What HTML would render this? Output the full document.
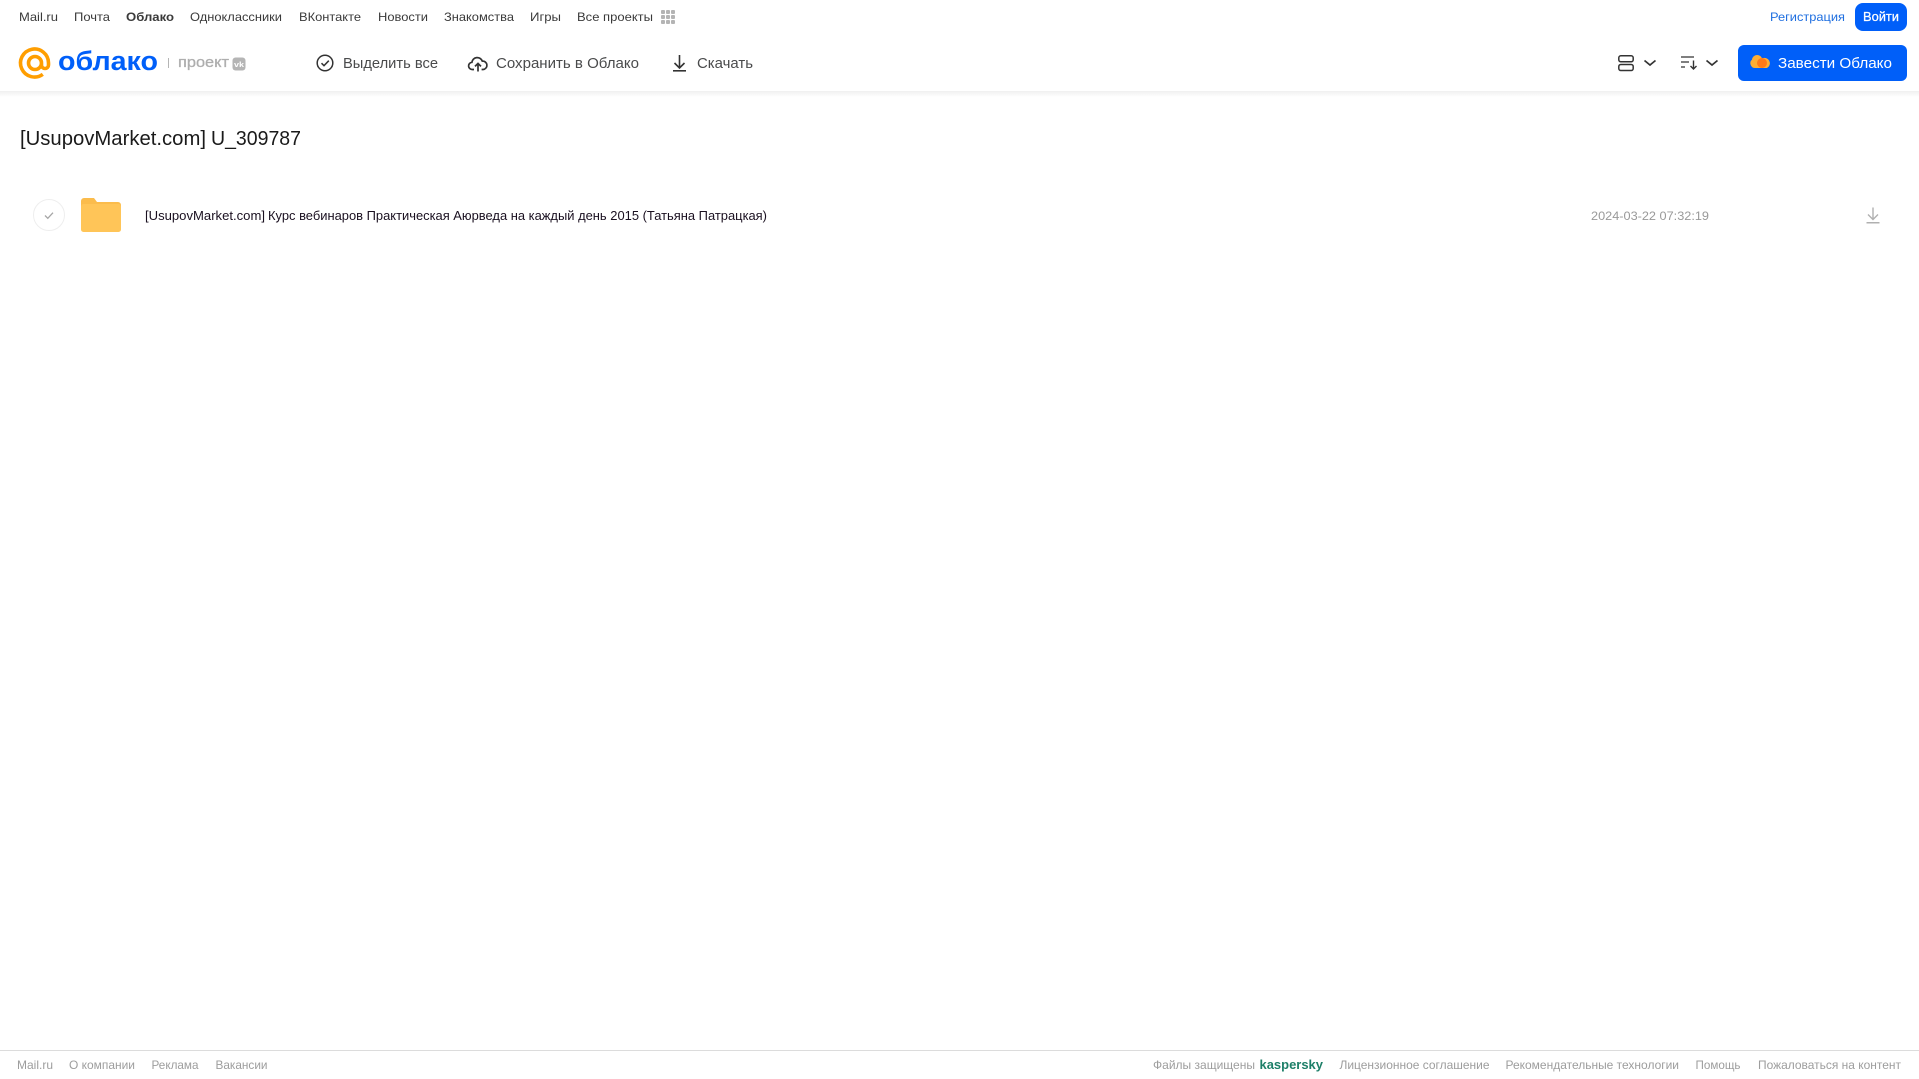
<!DOCTYPE html>
<html lang="ru">
<head>
<meta charset="utf-8">
<title>Облако</title>
<style>
html,body{margin:0;padding:0;background:#fff;width:1919px;height:1079px;overflow:hidden}
svg{display:block;position:absolute;left:0;top:0}
text{font-family:"Liberation Sans",sans-serif;white-space:pre}
.n{font-size:12px;fill:#3a3a3a}
.t{font-size:15px;fill:#4a4b4c}
.f{font-size:12px;fill:#9d9d9d}
</style>
</head>
<body>
<svg width="1919" height="1079" viewBox="0 0 1919 1079" xmlns="http://www.w3.org/2000/svg">
<defs>
<linearGradient id="sh" x1="0" y1="0" x2="0" y2="1"><stop offset="0" stop-color="#f0f0f0"/><stop offset="1" stop-color="#fff"/></linearGradient>
</defs>
<rect x="0" y="91" width="1919" height="6" fill="url(#sh)"/>

<!-- top nav -->
<text class="n" x="19" y="21" textLength="39" lengthAdjust="spacingAndGlyphs">Mail.ru</text>
<text class="n" x="74" y="21" textLength="36" lengthAdjust="spacingAndGlyphs">Почта</text>
<text class="n" x="126" y="21" textLength="48" lengthAdjust="spacingAndGlyphs" font-weight="700">Облако</text>
<text class="n" x="190" y="21" textLength="92" lengthAdjust="spacingAndGlyphs">Одноклассники</text>
<text class="n" x="299" y="21" textLength="62" lengthAdjust="spacingAndGlyphs">ВКонтакте</text>
<text class="n" x="378" y="21" textLength="50" lengthAdjust="spacingAndGlyphs">Новости</text>
<text class="n" x="444" y="21" textLength="70" lengthAdjust="spacingAndGlyphs">Знакомства</text>
<text class="n" x="530" y="21" textLength="31" lengthAdjust="spacingAndGlyphs">Игры</text>
<text class="n" x="577" y="21" textLength="76" lengthAdjust="spacingAndGlyphs">Все проекты</text>
<g fill="#b4b4b4">
<rect x="661" y="10" width="4" height="4" rx="1"/><rect x="666" y="10" width="4" height="4" rx="1"/><rect x="671" y="10" width="4" height="4" rx="1"/>
<rect x="661" y="15" width="4" height="4" rx="1"/><rect x="666" y="15" width="4" height="4" rx="1"/><rect x="671" y="15" width="4" height="4" rx="1"/>
<rect x="661" y="20" width="4" height="4" rx="1"/><rect x="666" y="20" width="4" height="4" rx="1"/><rect x="671" y="20" width="4" height="4" rx="1"/>
</g>

<text x="1770" y="21" font-size="12" fill="#1f6fe0" textLength="75" lengthAdjust="spacingAndGlyphs">Регистрация</text>
<rect x="1855" y="3" width="52" height="28" rx="8" fill="#005ff9"/>
<text x="1863" y="21" font-size="12.500" fill="#fff" stroke="#fff" stroke-width="0.250" textLength="36" lengthAdjust="spacingAndGlyphs">Войти</text>

<!-- logo -->
<path d="M41.500 63a6.500 6.500 0 1 1-6.500-6.500a6.500 6.500 0 0 1 6.500 6.500v2a3.500 3.500 0 0 0 7 0v-2a14 14 0 1 0-5.700 11.300" fill="none" stroke="#ff9e00" stroke-width="3.600"/>
<text x="58" y="70" font-size="27" font-weight="700" fill="#005ff9" textLength="100" lengthAdjust="spacingAndGlyphs">облако</text>
<rect x="168" y="58" width="1" height="10" fill="#b5b5b5"/>
<text x="178" y="67" font-size="15" fill="#aeaeae" stroke="#aeaeae" stroke-width="0.300" textLength="51" lengthAdjust="spacingAndGlyphs">проект</text>
<rect x="232.500" y="57.500" width="13" height="13" rx="3" fill="#b5b5b5"/>
<text x="234" y="67" font-size="7.500" font-weight="700" fill="#fff" textLength="10" lengthAdjust="spacingAndGlyphs">vk</text>

<!-- toolbar -->
<circle cx="325" cy="63" r="7.800" fill="none" stroke="#333" stroke-width="1.500"/>
<path d="M321.500 63.200l2.500 2.500l4.800-5" fill="none" stroke="#333" stroke-width="1.500"/>
<text class="t" x="343" y="68" textLength="95" lengthAdjust="spacingAndGlyphs">Выделить все</text>

<path d="M474 69.500h-1.500a3.600 3.600 0 0 1-.6-7.200a5.400 5.400 0 0 1 10.400-1.200a4.200 4.200 0 0 1 .8 8.400h-1.500" fill="none" stroke="#333" stroke-width="1.700"/>
<path d="M478 71.500v-8M475 66.400l3-3l3 3" fill="none" stroke="#333" stroke-width="1.700"/>
<text class="t" x="496" y="68" textLength="143" lengthAdjust="spacingAndGlyphs">Сохранить в Облако</text>

<path d="M679.500 55v13M674.500 63l5 5l5-5" fill="none" stroke="#333" stroke-width="1.600"/>
<rect x="673" y="70" width="13" height="1.600" fill="#333"/>
<text class="t" x="697" y="68" textLength="56" lengthAdjust="spacingAndGlyphs">Скачать</text>

<!-- view controls -->
<rect x="1618.800" y="55.800" width="14.400" height="6" rx="2" fill="none" stroke="#333" stroke-width="1.500"/>
<rect x="1618.800" y="64.500" width="14.400" height="6" rx="2" fill="none" stroke="#333" stroke-width="1.500"/>
<path d="M1644.500 60.500l5.500 4.500l5.500-4.500" fill="none" stroke="#333" stroke-width="1.700"/>
<path d="M1681 57h13M1681 62h8M1681 67h4" fill="none" stroke="#333" stroke-width="1.300"/>
<path d="M1693.500 60.500v8.500M1690.500 66l3 3l3-3" fill="none" stroke="#333" stroke-width="1.400"/>
<path d="M1706.500 60.500l5.500 4.500l5.500-4.500" fill="none" stroke="#333" stroke-width="1.700"/>

<rect x="1738" y="45" width="169" height="36" rx="6" fill="#005ff9"/>
<path d="M1757 55a5 5 0 0 1 5 3.500a5.200 5.200 0 0 1 5 9.500h-12a4.800 4.800 0 0 1-3-8.400a5 5 0 0 1 5-4.600z" fill="#ffae33"/>
<circle cx="1762" cy="63" r="5" fill="#ff7a1a"/>
<text x="1778" y="68" font-size="15" fill="#fff" textLength="114" lengthAdjust="spacingAndGlyphs">Завести Облако</text>

<!-- title -->
<text x="20" y="145" font-size="20" fill="#1a1a1a" textLength="186" lengthAdjust="spacingAndGlyphs">[UsupovMarket.com]</text>
<text x="211" y="145" font-size="20" fill="#1a1a1a" textLength="90" lengthAdjust="spacingAndGlyphs">U_309787</text>

<!-- row -->
<circle cx="49" cy="215" r="15.500" fill="#fff" stroke="#eeeeee" stroke-width="1"/>
<path d="M45 215.500l2.800 2.800l5.200-5.600" fill="none" stroke="#a6a6a6" stroke-width="1.300"/>
<path d="M81 201a3 3 0 0 1 3-3h10l3 4h21a3 3 0 0 1 3 3v5h-40z" fill="#fbbc4c"/>
<rect x="81" y="204" width="40" height="28" rx="2.500" fill="#ffc558"/>
<text x="145" y="220" font-size="13" fill="#1a1020" textLength="120" lengthAdjust="spacingAndGlyphs">[UsupovMarket.com]</text>
<text x="268" y="220" font-size="13" fill="#1a1020" textLength="499" lengthAdjust="spacingAndGlyphs">Курс вебинаров Практическая Аюрведа на каждый день 2015 (Татьяна Патрацкая)</text>
<text x="1591" y="220" font-size="12" fill="#999" textLength="118" lengthAdjust="spacingAndGlyphs">2024-03-22 07:32:19</text>
<path d="M1873 207.500v12M1868 214.500l5 5l5-5" fill="none" stroke="#b0b0b0" stroke-width="1.400"/>
<rect x="1866.500" y="222" width="13" height="1.500" fill="#b0b0b0"/>

<!-- footer -->
<rect x="0" y="1050" width="1919" height="1" fill="#dcdcdc"/>
<text class="f" x="17" y="1069" textLength="36" lengthAdjust="spacingAndGlyphs">Mail.ru</text>
<text class="f" x="69" y="1069" textLength="66" lengthAdjust="spacingAndGlyphs">О компании</text>
<text class="f" x="151.500" y="1069" textLength="47" lengthAdjust="spacingAndGlyphs">Реклама</text>
<text class="f" x="215.500" y="1069" textLength="52" lengthAdjust="spacingAndGlyphs">Вакансии</text>
<text class="f" x="1153" y="1069" textLength="102" lengthAdjust="spacingAndGlyphs">Файлы защищены</text>
<text x="1259.500" y="1069" font-size="13" font-weight="700" fill="#1d7f68" textLength="63.500" lengthAdjust="spacingAndGlyphs">kaspersky</text>
<text class="f" x="1339.500" y="1069" textLength="150" lengthAdjust="spacingAndGlyphs">Лицензионное соглашение</text>
<text class="f" x="1505.500" y="1069" textLength="173.500" lengthAdjust="spacingAndGlyphs">Рекомендательные технологии</text>
<text class="f" x="1695.500" y="1069" textLength="45" lengthAdjust="spacingAndGlyphs">Помощь</text>
<text class="f" x="1758" y="1069" textLength="143" lengthAdjust="spacingAndGlyphs">Пожаловаться на контент</text>
</svg>
</body>
</html>
